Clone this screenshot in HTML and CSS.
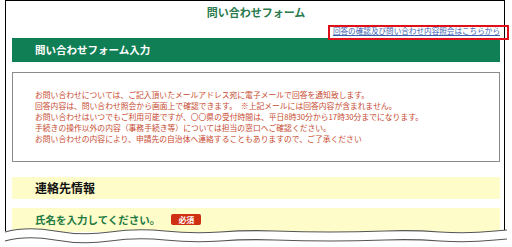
FILE: index.html
```html
<!DOCTYPE html>
<html lang="ja">
<head>
<meta charset="utf-8">
<link rel="stylesheet" href="styles.css">
</head>
<body>
<div class="frame">
  <div class="page-title">問い合わせフォーム</div>
  <div class="link-row"><a class="inquiry-link" href="#">回答の確認及び問い合わせ内容照会はこちらから</a></div>
  <div class="section-bar">問い合わせフォーム入力</div>
  <div class="notice">
    <p>お問い合わせについては、ご記入頂いたメールアドレス宛に電子メールで回答を通知致します。</p>
    <p>回答内容は、問い合わせ照会から画面上で確認できます。　※上記メールには回答内容が含まれません。</p>
    <p>お問い合わせはいつでもご利用可能ですが、〇〇県の受付時間は、平日8時30分から17時30分までになります。</p>
    <p>手続きの操作以外の内容（事務手続き等）については担当の窓口へご確認ください。</p>
    <p>お問い合わせの内容により、申請先の自治体へ連絡することもありますので、ご了承ください</p>
  </div>
  <div class="group-bar">連絡先情報</div>
  <div class="field-bar"><span class="field-label">氏名を入力してください。</span><span class="badge">必須</span></div>
</div>
<div class="highlight"></div>
<svg class="torn" width="512" height="24" viewBox="0 0 512 24">
  <path d="M0,7 Q27,1 55,6 T110,7 T165,6 T220,7 T275,6 T330,7 T385,6 T440,7 T495,6 T550,7 L512,24 L0,24 Z" fill="#fff"/>
  <path d="M5,7 Q27,1 55,6 T110,7 T165,6 T220,7 T275,6 T330,7 T385,6 T440,7 T495,6 L507,5" fill="none" stroke="#555" stroke-width="1.1"/>
  <path d="M5,16 Q27,10 55,15 T110,16 T165,15 T220,16 T275,15 T330,16 T385,15 T440,16 T495,15 L507,14" fill="none" stroke="#555" stroke-width="1.1"/>
</svg>
</body>
</html>
```
FILE: styles.css
```css
html, body {
  margin: 0;
  padding: 0;
  background: #fff;
}
body {
  width: 512px;
  height: 247px;
  overflow: hidden;
  position: relative;
  font-family: "Noto Sans CJK JP", "Noto Sans", sans-serif;
}
.frame {
  margin-left: 5px;
  width: 500px;
  height: 246px;
  border: 1px solid #000;
  border-bottom: none;
  padding: 0 4px 0 6px;
  box-sizing: border-box;
  display: flex;
  flex-direction: column;
}
.page-title {
  height: 23px;
  line-height: 23px;
  text-align: center;
  font-size: 11px;
  font-weight: bold;
  color: #2a7a4d;
}
.link-row {
  height: 14px;
  display: flex;
  justify-content: flex-end;
  align-items: center;
}
.inquiry-link {
  font-size: 7.6px;
  color: #3d5fae;
  text-decoration: underline;
  line-height: 10px;
}
.section-bar {
  height: 24px;
  line-height: 24px;
  background: #117f55;
  color: #fff;
  font-size: 10.5px;
  font-weight: bold;
  padding-left: 23px;
}
.notice {
  margin-top: 10px;
  height: 90px;
  box-sizing: border-box;
  border: 1px solid #8a8a8a;
  padding: 16px 0 0 22px;
  color: #c74a2f;
  font-size: 7.8px;
  line-height: 11px;
}
.notice p {
  margin: 0;
  white-space: nowrap;
}
.group-bar {
  margin-top: 15px;
  height: 22px;
  line-height: 22px;
  background: #fefdc9;
  color: #111;
  font-size: 12px;
  font-weight: bold;
  padding-left: 23px;
}
.field-bar {
  margin-top: 9px;
  height: 24px;
  background: #fefdc9;
  padding-left: 23px;
  display: flex;
  align-items: center;
  gap: 11px;
  padding-bottom: 2px;
  box-sizing: border-box;
}
.field-label {
  color: #1f7a44;
  font-size: 10.5px;
  font-weight: bold;
}
.badge {
  background: #cf2f12;
  color: #fff;
  font-size: 8px;
  font-weight: bold;
  line-height: 11px;
  padding: 0 7px;
  border-radius: 2px;
}
.highlight {
  position: absolute;
  left: 328px;
  top: 25px;
  width: 181px;
  height: 15px;
  border: 2px solid #e0101a;
  box-sizing: border-box;
}
.torn {
  position: absolute;
  left: 0;
  top: 225px;
  display: block;
}
```
